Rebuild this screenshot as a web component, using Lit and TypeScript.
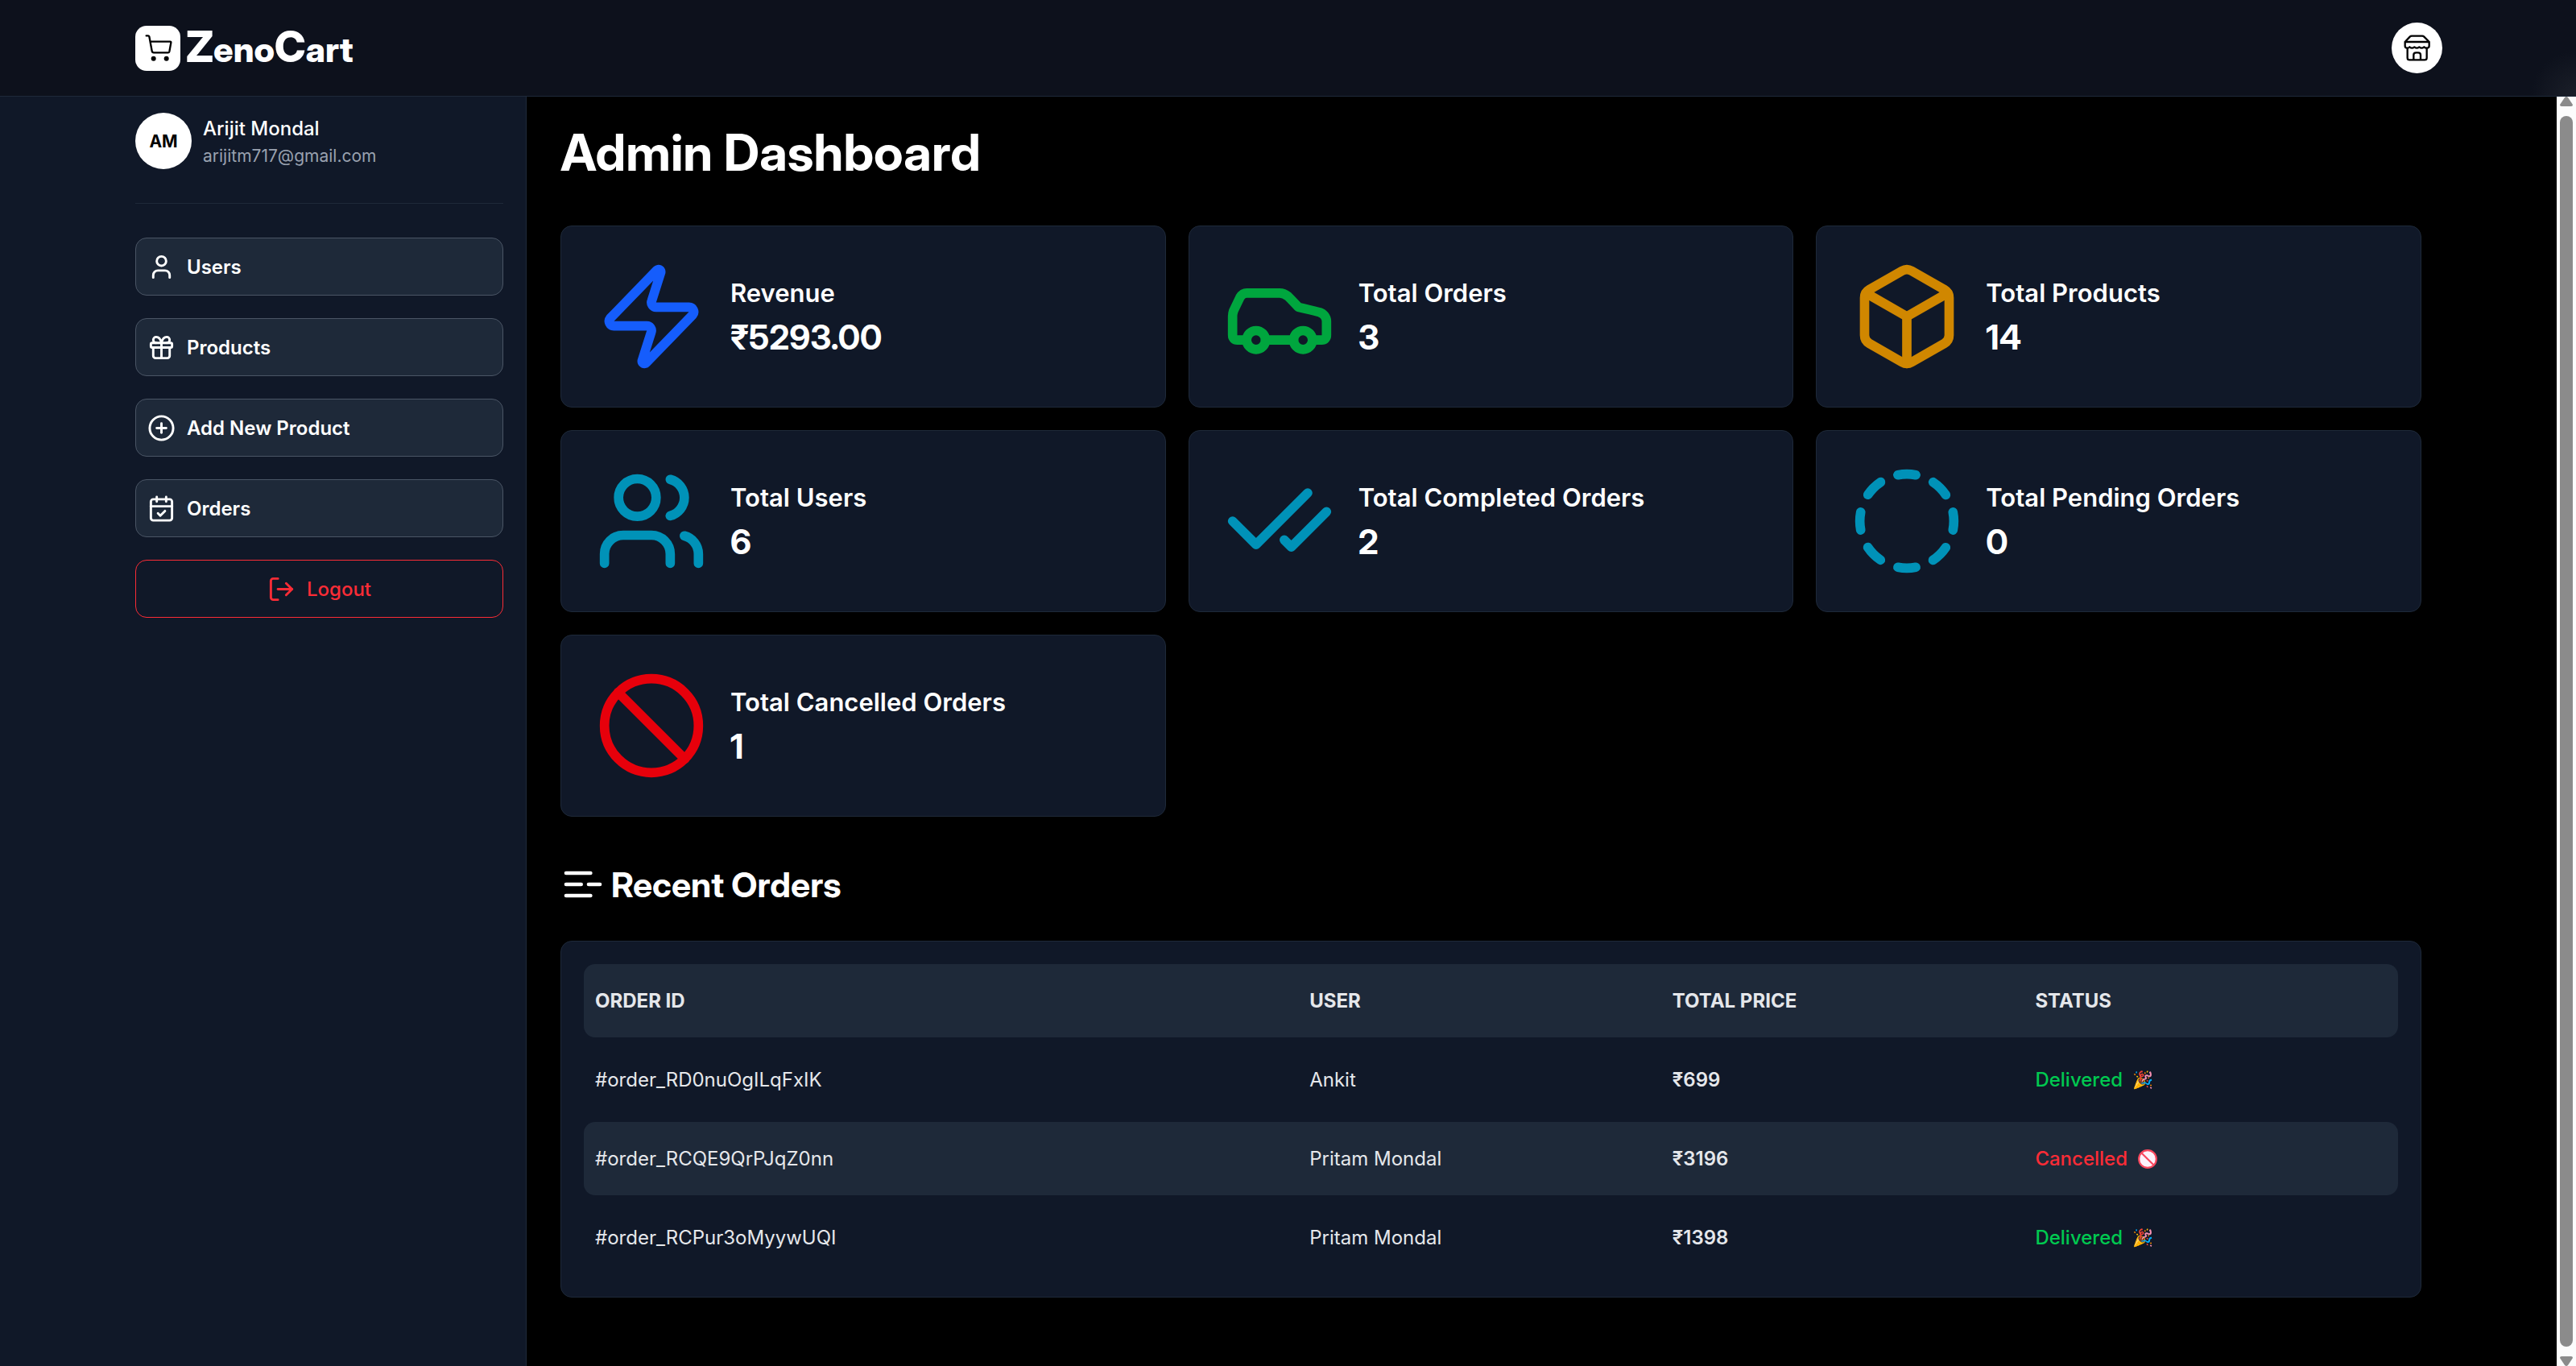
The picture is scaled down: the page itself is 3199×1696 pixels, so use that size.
import { LitElement, html, css, svg } from "lit";
import { customElement } from "lit/decorators.js";

const icons: Record<string, unknown> = {
  user: svg`<path d="M19 21v-2a4 4 0 0 0-4-4H9a4 4 0 0 0-4 4v2"/><circle cx="12" cy="7" r="4"/>`,
  gift: svg`<rect x="3" y="8" width="18" height="4" rx="1"/><path d="M12 8v13"/><path d="M19 12v7a2 2 0 0 1-2 2H7a2 2 0 0 1-2-2v-7"/><path d="M7.5 8a2.5 2.5 0 0 1 0-5A4.8 8 0 0 1 12 8a4.8 8 0 0 1 4.5-5 2.5 2.5 0 0 1 0 5"/>`,
  plus: svg`<circle cx="12" cy="12" r="10"/><path d="M8 12h8"/><path d="M12 8v8"/>`,
  calendar: svg`<path d="M8 2v4"/><path d="M16 2v4"/><rect x="3" y="4" width="18" height="18" rx="2"/><path d="M3 10h18"/><path d="m9 16 2 2 4-4"/>`,
  logout: svg`<path d="m16 17 5-5-5-5"/><path d="M21 12H9"/><path d="M9 21H5a2 2 0 0 1-2-2V5a2 2 0 0 1 2-2h4"/>`,
  zap: svg`<path d="M4 14a1 1 0 0 1-.78-1.63l9.9-10.2a.5.5 0 0 1 .86.46l-1.92 6.02A1 1 0 0 0 13 10h7a1 1 0 0 1 .78 1.63l-9.9 10.2a.5.5 0 0 1-.86-.46l1.92-6.02A1 1 0 0 0 11 14z"/>`,
  car: svg`<path d="M19 17h2c.6 0 1-.4 1-1v-3c0-.9-.7-1.7-1.5-1.9C18.7 10.6 16 10 16 10s-1.3-1.4-2.2-2.3c-.5-.4-1.1-.7-1.8-.7H5c-.6 0-1.1.4-1.4.9l-1.4 2.9A3.7 3.7 0 0 0 2 12v4c0 .6.4 1 1 1h2"/><circle cx="7" cy="17" r="2"/><path d="M9 17h6"/><circle cx="17" cy="17" r="2"/>`,
  box: svg`<path d="M21 8a2 2 0 0 0-1-1.730l-7-4a2 2 0 0 0-2 0l-7 4A2 2 0 0 0 3 8v8a2 2 0 0 0 1 1.730l7 4a2 2 0 0 0 2 0l7-4A2 2 0 0 0 21 16Z"/><path d="m3.300 7 8.700 5 8.700-5"/><path d="M12 22V12"/>`,
  users: svg`<path d="M16 21v-2a4 4 0 0 0-4-4H6a4 4 0 0 0-4 4v2"/><circle cx="9" cy="7" r="4"/><path d="M22 21v-2a4 4 0 0 0-3-3.870"/><path d="M16 3.130a4 4 0 0 1 0 7.750"/>`,
  checks: svg`<path d="M18 6 7 17l-5-5"/><path d="m22 10-7.500 7.500L13 16"/>`,
  dashed: svg`<path d="M10.100 2.182a10 10 0 0 1 3.800 0"/><path d="M13.900 21.818a10 10 0 0 1-3.800 0"/><path d="M17.609 3.721a10 10 0 0 1 2.690 2.700"/><path d="M2.182 13.900a10 10 0 0 1 0-3.800"/><path d="M20.279 17.609a10 10 0 0 1-2.700 2.690"/><path d="M21.818 10.100a10 10 0 0 1 0 3.800"/><path d="M3.721 6.391a10 10 0 0 1 2.700-2.690"/><path d="M6.391 20.279a10 10 0 0 1-2.690-2.700"/>`,
  ban: svg`<circle cx="12" cy="12" r="10"/><path d="m4.900 4.900 14.200 14.200"/>`,
  list: svg`<path d="M11 12H3"/><path d="M16 6H3"/><path d="M16 18H3"/><path d="M21 12h-6"/>`,
};

const icon = (name: string, cls = "") =>
  html`<svg class="icon ${cls}" viewBox="0 0 24 24" aria-hidden="true">${icons[name]}</svg>`;

const cartMark = html`<svg class="mark" viewBox="0 0 168 168" aria-hidden="true">
  <path d="M41 37h7q3 0 4 3l10 54q1 6 7 6h53q4 0 5-4l6-33q1-4-3-4H57"/>
  <circle class="wheel" cx="68" cy="122" r="9"/>
  <circle class="wheel" cx="116" cy="122" r="9"/>
</svg>`;

const shopMark = html`<svg class="shop" viewBox="0 0 189 189" aria-hidden="true">
  <path d="M50 72 68 53q3-3 7-3h39q4 0 7 3l19 19zM50 72v15q0 8 8 8 6 0 9-4 5 4 9 4t9-4q5 4 9 4t9-4q5 4 9 4t9-4q4 4 10 4 9 0 9-8V72"/>
  <path d="M59 96v35q0 8 8 8h56q8 0 8-8V96M82 139v-18q0-9 9-9h8q9 0 9 9v18"/>
</svg>`;

const popper = html`<span class="emoji">🎉</span>`;
const noEntry = html`<svg class="no-entry" viewBox="0 0 24 24" role="img" aria-label="🚫">
  <circle cx="12" cy="12" r="10"/><path d="m5 5 14 14"/>
</svg>`;

const nav = [
  ["user", "Users"],
  ["gift", "Products"],
  ["plus", "Add New Product"],
  ["calendar", "Orders"],
];

const stats = [
  ["zap", "blue", "Revenue", "₹5293.00"],
  ["car", "green", "Total Orders", "3"],
  ["box", "amber", "Total Products", "14"],
  ["users", "cyan", "Total Users", "6"],
  ["checks", "cyan", "Total Completed Orders", "2"],
  ["dashed", "cyan", "Total Pending Orders", "0"],
  ["ban", "red", "Total Cancelled Orders", "1"],
];

const orders = [
  ["#order_RD0nuOgILqFxIK", "Ankit", "₹699", "Delivered"],
  ["#order_RCQE9QrPJqZ0nn", "Pritam Mondal", "₹3196", "Cancelled"],
  ["#order_RCPur3oMyywUQI", "Pritam Mondal", "₹1398", "Delivered"],
];

@customElement("app-root")
export class AppRoot extends LitElement {
  static styles = css`
    :host {
      display: flex;
      flex-direction: column;
      height: 100vh;
      background: #000;
      color: #fff;
      font-family: Inter, "Liberation Sans", sans-serif;
      font-size: 24px;
      line-height: 35px;
    }
    * {
      box-sizing: border-box;
    }
    h1, h2, p {
      margin: 0;
    }
    .icon {
      display: block;
      flex: none;
      width: 35px;
      height: 35px;
      fill: none;
      stroke: currentColor;
      stroke-width: 2;
      stroke-linecap: round;
      stroke-linejoin: round;
    }
    .display {
      font-family: "Inter Display", Inter, "Liberation Sans", sans-serif;
    }
    .header {
      flex: none;
      display: flex;
      align-items: center;
      justify-content: space-between;
      height: 120px;
      padding: 0 166px 0 168px;
      border-bottom: 1px solid #1e2939;
      background: radial-gradient(circle at 100% 100%, #1b1f29 0, #0d111c 56px);
    }
    .brand {
      display: flex;
      align-items: center;
      gap: 7px;
      color: #fff;
      text-decoration: none;
      font-size: 43px;
      line-height: 56px;
      font-weight: 800;
    }
    .mark {
      display: block;
      width: 56px;
      height: 56px;
      border-radius: 14px;
      background: #fff;
      fill: none;
      stroke: #000;
      stroke-width: 7;
      stroke-linecap: round;
      stroke-linejoin: round;
    }
    .wheel {
      fill: #000;
      stroke: none;
    }
    .cap {
      font-size: 53px;
    }
    .store {
      width: 63px;
      height: 63px;
      padding: 0;
      border: 0;
      border-radius: 50%;
      background: #fff;
    }
    .shop {
      display: block;
      width: 63px;
      height: 63px;
      fill: none;
      stroke: #000;
      stroke-width: 7;
      stroke-linecap: round;
      stroke-linejoin: round;
    }
    .body {
      flex: 1;
      min-height: 0;
      display: flex;
    }
    .side {
      flex: none;
      width: 654px;
      padding: 20px 28px 0 168px;
      border-right: 1px solid #1e2939;
      background: #101828;
    }
    .profile {
      display: flex;
      gap: 14px;
      height: 113px;
      border-bottom: 1px solid #1e2939;
      margin-bottom: 42px;
    }
    .avatar {
      display: grid;
      place-items: center;
      width: 70px;
      height: 70px;
      border-radius: 50%;
      background: #fff;
      color: #000;
      font-size: 21px;
      font-weight: 700;
    }
    .name {
      font-weight: 500;
      line-height: 40px;
    }
    .mail {
      font-size: 21px;
      line-height: 28px;
      color: #99a1af;
    }
    .nav {
      display: flex;
      flex-direction: column;
      gap: 28px;
    }
    .item {
      display: flex;
      align-items: center;
      gap: 14px;
      height: 72px;
      padding: 0 14px;
      border: 1px solid #4a5565;
      border-radius: 14px;
      background: #1e2939;
      color: #fff;
      font: inherit;
      font-weight: 600;
      text-decoration: none;
    }
    .logout {
      justify-content: center;
      border-color: #fb2c36;
      background: none;
      color: #fb2c36;
      font-weight: 500;
    }
    .main {
      flex: 1;
      min-width: 0;
      padding: 34px 168px 0 42px;
    }
    .title {
      font-size: 63px;
      line-height: 70px;
      font-weight: 700;
    }
    .cards {
      display: grid;
      grid-template-columns: repeat(3, minmax(0, 1fr));
      gap: 28px;
      margin-top: 56px;
    }
    .card {
      display: flex;
      align-items: center;
      gap: 28px;
      padding: 42px;
      border: 1px solid #1e2939;
      border-radius: 14px;
      background: #101828;
    }
    .big {
      width: 140px;
      height: 140px;
    }
    .blue { color: #155dfc; }
    .green { color: #00a63e; }
    .amber { color: #d08700; }
    .cyan { color: #0092b8; }
    .red { color: #e7000b; }
    .facts {
      display: flex;
      flex-direction: column;
      gap: 3px;
    }
    .label {
      font-size: 31px;
      line-height: 49px;
      font-weight: 600;
    }
    .value {
      font-size: 42px;
      line-height: 56px;
      font-weight: 700;
    }
    .recent {
      display: flex;
      align-items: center;
      gap: 7px;
      margin: 56px 0 42px;
      font-size: 43px;
      line-height: 56px;
      font-weight: 700;
    }
    .mid {
      width: 56px;
      height: 56px;
    }
    .panel {
      padding: 28px;
      border: 1px solid #1e2939;
      border-radius: 14px;
      background: #101828;
      color: #e5e7eb;
    }
    .table {
      display: block;
    }
    .table thead, .table tbody {
      display: grid;
      gap: 7px;
    }
    .table tbody {
      margin-top: 7px;
    }
    .row {
      display: grid;
      grid-template-columns: 2fr 1fr 1fr 1fr;
      gap: 14px;
      padding: 28px 14px;
      border-radius: 14px;
    }
    .row th, .row td {
      padding: 0;
      text-align: left;
    }
    .head, .row:nth-child(even) {
      background: #1e2939;
    }
    .price { font-weight: 600; }
    .row .status {
      display: flex;
      align-items: center;
      gap: 12px;
      font-weight: 500;
    }
    .delivered { color: #00c950; }
    .cancelled { color: #fb2c36; }
    .emoji {
      font-family: "Noto Color Emoji", sans-serif;
      font-size: 21px;
      line-height: 24px;
    }
    .no-entry {
      display: block;
      width: 26px;
      height: 26px;
      fill: #fdf2fb;
      stroke: #f8485e;
      stroke-width: 2;
    }
    .scroll {
      flex: none;
      display: flex;
      flex-direction: column;
      align-items: center;
      gap: 12px;
      width: 24px;
      background: #fcfcfc;
    }
    .arrow {
      display: block;
      width: 16px;
      height: 12px;
      fill: #8b8b8b;
    }
    .thumb {
      flex: 1;
      width: 16px;
      border-radius: 8px;
      background: #8b8b8b;
    }
  `;

  render() {
    return html`
      <header class="header">
        <a class="brand display" href="#">
          ${cartMark}
          <span><span class="cap">Z</span>eno<span class="cap">C</span>art</span>
        </a>
        <button class="store" aria-label="Store">${shopMark}</button>
      </header>
      <div class="body">
        <aside class="side">
          <div class="profile">
            <span class="avatar">AM</span>
            <div>
              <p class="name">Arijit Mondal</p>
              <p class="mail">arijitm717@gmail.com</p>
            </div>
          </div>
          <nav class="nav">
            ${nav.map(([i, t]) => html`<a class="item" href="#">${icon(i)}<span>${t}</span></a>`)}
            <button class="item logout">${icon("logout")}<span>Logout</span></button>
          </nav>
        </aside>
        <main class="main">
          <h1 class="title display">Admin Dashboard</h1>
          <section class="cards">
            ${stats.map(
              ([i, color, label, value]) => html`<div class="card">
                ${icon(i, `big ${color}`)}
                <div class="facts">
                  <p class="label">${label}</p>
                  <p class="value display">${value}</p>
                </div>
              </div>`
            )}
          </section>
          <h2 class="recent display">${icon("list", "mid")}<span>Recent Orders</span></h2>
          <div class="panel">
            <table class="table">
              <thead>
                <tr class="row head">
                  <th>ORDER ID</th><th>USER</th><th>TOTAL PRICE</th><th>STATUS</th>
                </tr>
              </thead>
              <tbody>
                ${orders.map(
                  ([id, user, price, status]) => html`<tr class="row">
                    <td>${id}</td>
                    <td>${user}</td>
                    <td class="price">${price}</td>
                    <td class="status ${status.toLowerCase()}">
                      <span>${status}</span>${status === "Delivered" ? popper : noEntry}
                    </td>
                  </tr>`
                )}
              </tbody>
            </table>
          </div>
        </main>
        <div class="scroll" aria-hidden="true">
          <svg class="arrow" viewBox="0 0 16 12"><path d="M6 1q2-2 4 0l6 9q0 2-2 2H2q-2 0-2-2z"/></svg>
          <div class="thumb"></div>
          <svg class="arrow" viewBox="0 0 16 12"><path d="M6 11q2 2 4 0l6-9q0-2-2-2H2Q0 0 0 2z"/></svg>
        </div>
      </div>
    `;
  }
}
